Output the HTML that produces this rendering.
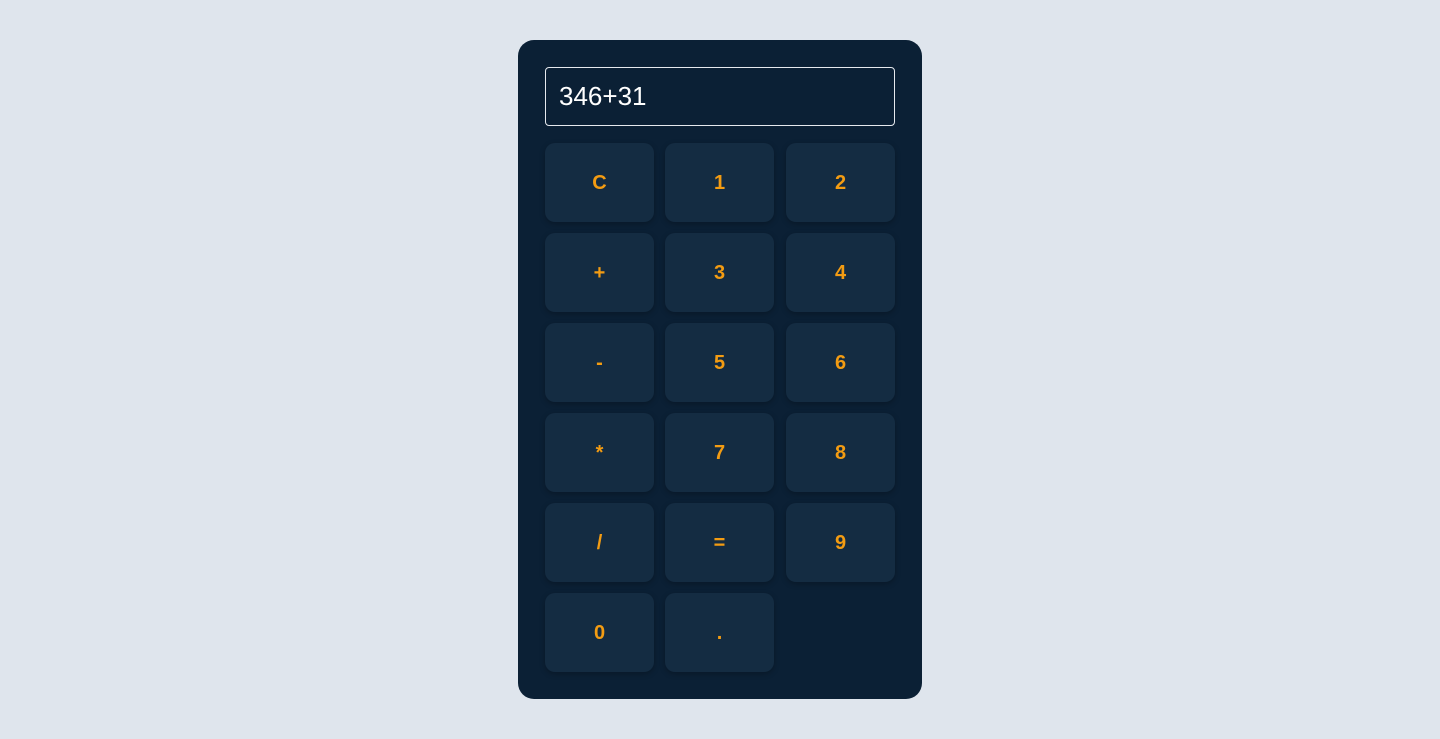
<!DOCTYPE html>
<html><head><meta charset="utf-8"><style>
html,body{margin:0;padding:0;width:1440px;height:739px;background:#dfe5ed;overflow:hidden;font-family:"Liberation Sans",Arial,sans-serif}
.card{position:absolute;left:518px;top:40px;width:404px;height:659px;background:#0b2035;border-radius:16px}
.disp{position:absolute;left:27px;top:27px;height:57px;border:1px solid #e6e9ee;border-radius:4px;color:#fff;font-size:26px;line-height:57px;padding-left:13px;width:335px}
.b{position:absolute;width:109px;height:79px;box-sizing:border-box;padding-top:2px;background:#142c42;border-radius:10px;color:#f39c12;font-weight:bold;font-size:20px;display:flex;align-items:center;justify-content:center;box-shadow:0 2px 6px rgba(0,0,0,.25)}
</style></head><body>
<div class="card">
<div class="disp">346+31</div>
<div class="b" style="left:27px;top:103px">C</div>
<div class="b" style="left:147px;top:103px">1</div>
<div class="b" style="left:268px;top:103px">2</div>
<div class="b" style="left:27px;top:193px">+</div>
<div class="b" style="left:147px;top:193px">3</div>
<div class="b" style="left:268px;top:193px">4</div>
<div class="b" style="left:27px;top:283px">-</div>
<div class="b" style="left:147px;top:283px">5</div>
<div class="b" style="left:268px;top:283px">6</div>
<div class="b" style="left:27px;top:373px">*</div>
<div class="b" style="left:147px;top:373px">7</div>
<div class="b" style="left:268px;top:373px">8</div>
<div class="b" style="left:27px;top:463px">/</div>
<div class="b" style="left:147px;top:463px">=</div>
<div class="b" style="left:268px;top:463px">9</div>
<div class="b" style="left:27px;top:553px">0</div>
<div class="b" style="left:147px;top:553px">.</div>
</div>
</body></html>
